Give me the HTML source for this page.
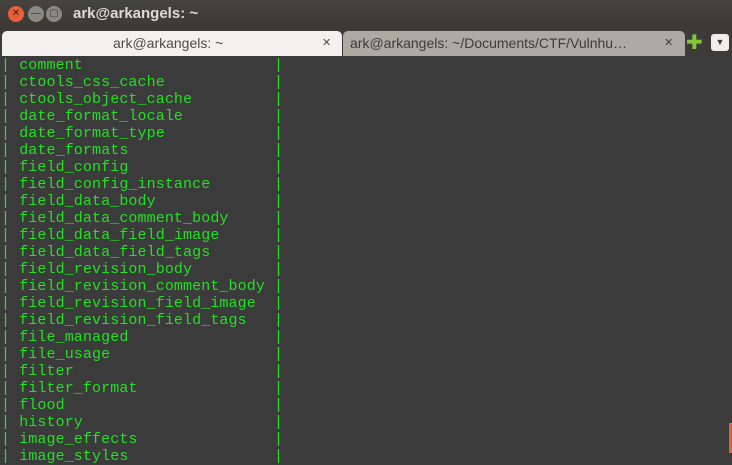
<!DOCTYPE html>
<html><head><meta charset="utf-8"><style>
*{margin:0;padding:0;box-sizing:border-box}
body{width:732px;height:465px;overflow:hidden;background:#3b3b3b;font-family:"Liberation Sans","DejaVu Sans",sans-serif;position:relative}
#title{position:absolute;left:0;top:0;width:732px;height:29px;background:linear-gradient(#45443f,#3a3935)}
.btn{position:absolute;top:6px;width:16px;height:16px;border-radius:50%;font-size:10px;line-height:16px;text-align:center}
#ttl{position:absolute;left:73px;top:5px;color:#dfdbd2;font-weight:bold;font-size:15px}
#tabs{position:absolute;left:0;top:29px;width:732px;height:27px;background:#3c3b37}
.tab{position:absolute;top:2px;height:25px;border-radius:5px 5px 0 0;font-size:14px;line-height:25px}
pre{position:absolute;left:1px;top:57px;font-family:"Liberation Mono","DejaVu Sans Mono",monospace;font-size:15px;line-height:17px;letter-spacing:0.1px;color:#22e022}
</style></head><body>
<div id="title">
<div class="btn" style="left:8px;background:#e8603a;color:#4a1a0a">✕</div>
<div class="btn" style="left:28px;background:#8a8984;color:#3c3b37">—</div>
<div class="btn" style="left:46px;background:#8a8984;color:#3c3b37">▢</div>
<div id="ttl">ark@arkangels: ~</div>
</div>
<div id="tabs">
<div class="tab" style="left:2px;width:340px;background:#f2f1f0;color:#4c4c4c"><span style="position:absolute;left:111px">ark@arkangels: ~</span><span style="position:absolute;left:320px;font-size:11px">✕</span></div>
<div class="tab" style="left:343px;width:342px;background:#ada9a3;color:#3c3c3c"><span style="position:absolute;left:7px">ark@arkangels: ~/Documents/CTF/Vulnhu…</span><span style="position:absolute;left:321px;font-size:11px">✕</span></div>
<div style="position:absolute;left:686px;top:5px;color:#86c53a;font-size:20px;font-weight:bold;line-height:18px">✚</div>
<div style="position:absolute;left:711px;top:5px;width:18px;height:17px;background:#f0efed;border-radius:3px;color:#3c3b37;font-size:9px;text-align:center;line-height:17px">▼</div>
</div>
<pre>| comment                     |
| ctools_css_cache            |
| ctools_object_cache         |
| date_format_locale          |
| date_format_type            |
| date_formats                |
| field_config                |
| field_config_instance       |
| field_data_body             |
| field_data_comment_body     |
| field_data_field_image      |
| field_data_field_tags       |
| field_revision_body         |
| field_revision_comment_body |
| field_revision_field_image  |
| field_revision_field_tags   |
| file_managed                |
| file_usage                  |
| filter                      |
| filter_format               |
| flood                       |
| history                     |
| image_effects               |
| image_styles                |</pre>
<div style="position:absolute;left:729px;top:423px;width:3px;height:30px;background:#d4673a"></div>
</body></html>
